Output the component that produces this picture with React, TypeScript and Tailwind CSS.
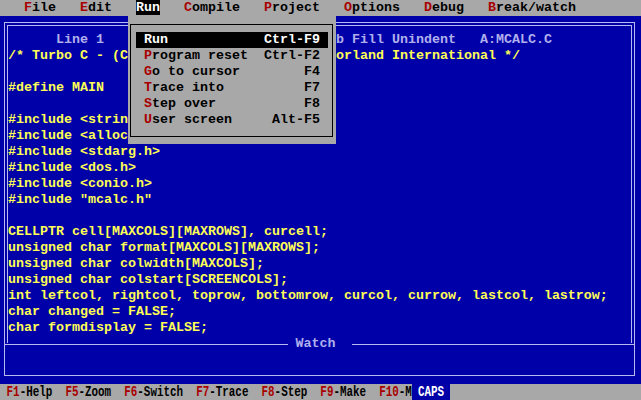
const code = [
  '/* Turbo C - (C) Copyright 1987,1988 by Borland International */',
  '',
  '#define MAIN',
  '',
  '#include <string.h>',
  '#include <alloc.h>',
  '#include <stdarg.h>',
  '#include <dos.h>',
  '#include <conio.h>',
  '#include "mcalc.h"',
  '',
  'CELLPTR cell[MAXCOLS][MAXROWS], curcell;',
  'unsigned char format[MAXCOLS][MAXROWS];',
  'unsigned char colwidth[MAXCOLS];',
  'unsigned char colstart[SCREENCOLS];',
  'int leftcol, rightcol, toprow, bottomrow, curcol, currow, lastcol, lastrow;',
  'char changed = FALSE;',
  'char formdisplay = FALSE;',
]

const runMenu = [
  { key: 'R', rest: 'un', hot: 'Ctrl-F9' },
  { key: 'P', rest: 'rogram reset', hot: 'Ctrl-F2' },
  { key: 'G', rest: 'o to cursor', hot: 'F4' },
  { key: 'T', rest: 'race into', hot: 'F7' },
  { key: 'S', rest: 'tep over', hot: 'F8' },
  { key: 'U', rest: 'ser screen', hot: 'Alt-F5' },
]

const keys = [
  ['F1', '-Help'],
  ['F5', '-Zoom'],
  ['F6', '-Switch'],
  ['F7', '-Trace'],
  ['F8', '-Step'],
  ['F9', '-Make'],
  ['F10', '-M'],
]

const Hi = ({ children }: { children: string }) => <span className="text-[#a80000]">{children}</span>

const App = () => {
  return (
    <div className="relative w-[641px] h-[400px] bg-[#0000a8] flex flex-col overflow-hidden font-['Liberation_Mono',monospace] font-bold text-[13.33px] leading-4">
      {/* menu bar */}
      <div className="h-4 bg-[#a8a8a8] text-black whitespace-pre">
        {'   '}<Hi>F</Hi>ile{'   '}<Hi>E</Hi>dit{'   '}
        <span className="bg-black text-white">Run</span>
        {'   '}<Hi>C</Hi>ompile{'   '}<Hi>P</Hi>roject{'   '}<Hi>O</Hi>ptions{'   '}<Hi>D</Hi>ebug{'   '}<Hi>B</Hi>reak/watch
      </div>

      {/* windows */}
      <div className="h-[368px] pl-[4px] pt-[6px]">
        <div className="w-[631px] h-[354px] border border-[#b8b8f0] flex flex-col">
          <div className="mx-[2px] mt-[2px] border-x border-t border-[#b8b8f0] pt-[6px] pb-[7px]">
            <div className="h-4 whitespace-pre text-[#b0b0ec]">
              {'      Line 1      Col 1  Insert Indent Tab Fill Unindent   A:MCALC.C'}
            </div>
            {code.map((line, i) => (
              <div key={i} className="h-4 whitespace-pre text-[#ffff55]">{line}</div>
            ))}
          </div>
          <div className="-mt-[7px] h-4 flex items-center">
            <div className="flex-1 h-px bg-[#b8b8f0]" />
            <span className="pl-[8px] pr-[16px] text-[#b0b0ec]">Watch</span>
            <div className="flex-1 h-px bg-[#b8b8f0]" />
          </div>
          <div className="flex-1" />
        </div>
      </div>

      {/* status line */}
      <div className="h-4 bg-[#a8a8a8] flex items-stretch text-[10.9px] whitespace-pre text-black">
        <div className="flex items-center scale-y-[1.3]">
          <span>{' '}</span>
          {keys.map(([k, label], i) => (
            <span key={k}>
              <span className="text-[#a80000]">{k}</span>
              {label}
              {i < keys.length - 1 ? '  ' : ''}
            </span>
          ))}
        </div>
        <div className="w-[38px] bg-[#0000a8] text-white flex items-center pl-[6px]">
          <span className="scale-y-[1.3]">CAPS</span>
        </div>
      </div>

      {/* Run pull-down */}
      <div className="absolute left-[128px] top-[16px] w-[208px] h-[128px] bg-[#a8a8a8] pl-[2px] pr-[3px] pt-[8px] pb-[7px]">
        <div className="h-full border border-black pl-[5px] pt-[7px]">
          {runMenu.map((item, i) => (
            <div
              key={item.key}
              className={`w-[192px] h-4 flex justify-between whitespace-pre px-2 ${i === 0 ? 'bg-black text-white' : 'text-black'}`}
            >
              <span>
                <span className={i === 0 ? '' : 'text-[#a80000]'}>{item.key}</span>
                {item.rest}
              </span>
              <span>{item.hot}</span>
            </div>
          ))}
        </div>
      </div>
    </div>
  )
}

export default App
